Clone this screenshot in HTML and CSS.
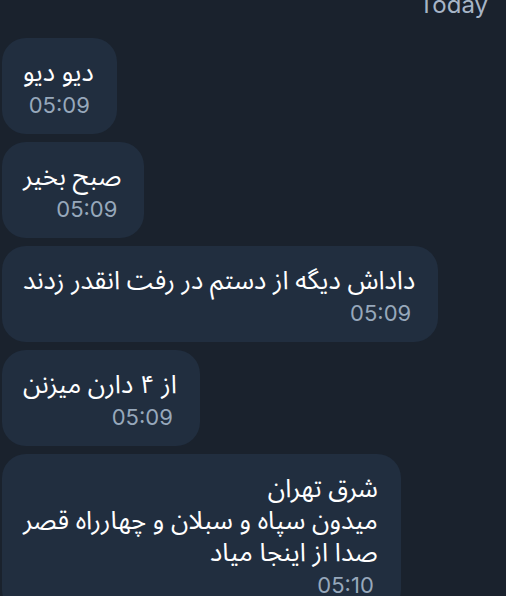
FILE: index.html
```html
<!DOCTYPE html>
<html lang="fa">
<head>
<meta charset="utf-8">
<link rel="stylesheet" href="styles.css">
</head>
<body>
<div class="chat">
  <div class="day">Today</div>
  <div class="bubble">
    <div class="text" dir="rtl">دیو دیو</div>
    <div class="time">05:09</div>
  </div>
  <div class="bubble">
    <div class="text" dir="rtl">صبح بخیر</div>
    <div class="time">05:09</div>
  </div>
  <div class="bubble">
    <div class="text" dir="rtl">داداش دیگه از دستم در رفت انقدر زدند</div>
    <div class="time">05:09</div>
  </div>
  <div class="bubble">
    <div class="text" dir="rtl">از ۴ دارن میزنن</div>
    <div class="time">05:09</div>
  </div>
  <div class="bubble">
    <div class="text" dir="rtl">شرق تهران<br>میدون سپاه و سبلان و چهارراه قصر<br>صدا از اینجا میاد</div>
    <div class="time">05:10</div>
  </div>
</div>
</body>
</html>
```

FILE: styles.css
```css
html, body {
  margin: 0;
  padding: 0;
  background: #1a222d;
  overflow: hidden;
}
.chat {
  display: flex;
  flex-direction: column;
  align-items: flex-start;
  gap: 8px;
  padding-left: 2px;
  margin-top: -11px;
}
.day {
  align-self: flex-end;
  margin-right: 18px;
  margin-bottom: 9px;
  font-family: Inter, "Liberation Sans", sans-serif;
  font-size: 24px;
  line-height: 32px;
  color: #a7b5c7;
}
.bubble {
  display: flex;
  flex-direction: column;
  background: #212e3f;
  border-radius: 24px;
  padding: 19px 23px 13px 21px;
}
.text {
  font-family: "Noto Sans Arabic", "Noto Naskh Arabic", "DejaVu Sans", sans-serif;
  font-size: 25.7px;
  line-height: 32px;
  color: #ffffff;
  text-align: right;
}
.time {
  align-self: flex-end;
  margin-right: 4px;
  font-family: Inter, "Liberation Sans", sans-serif;
  font-size: 22px;
  line-height: 32px;
  color: #97a8bb;
}
```
